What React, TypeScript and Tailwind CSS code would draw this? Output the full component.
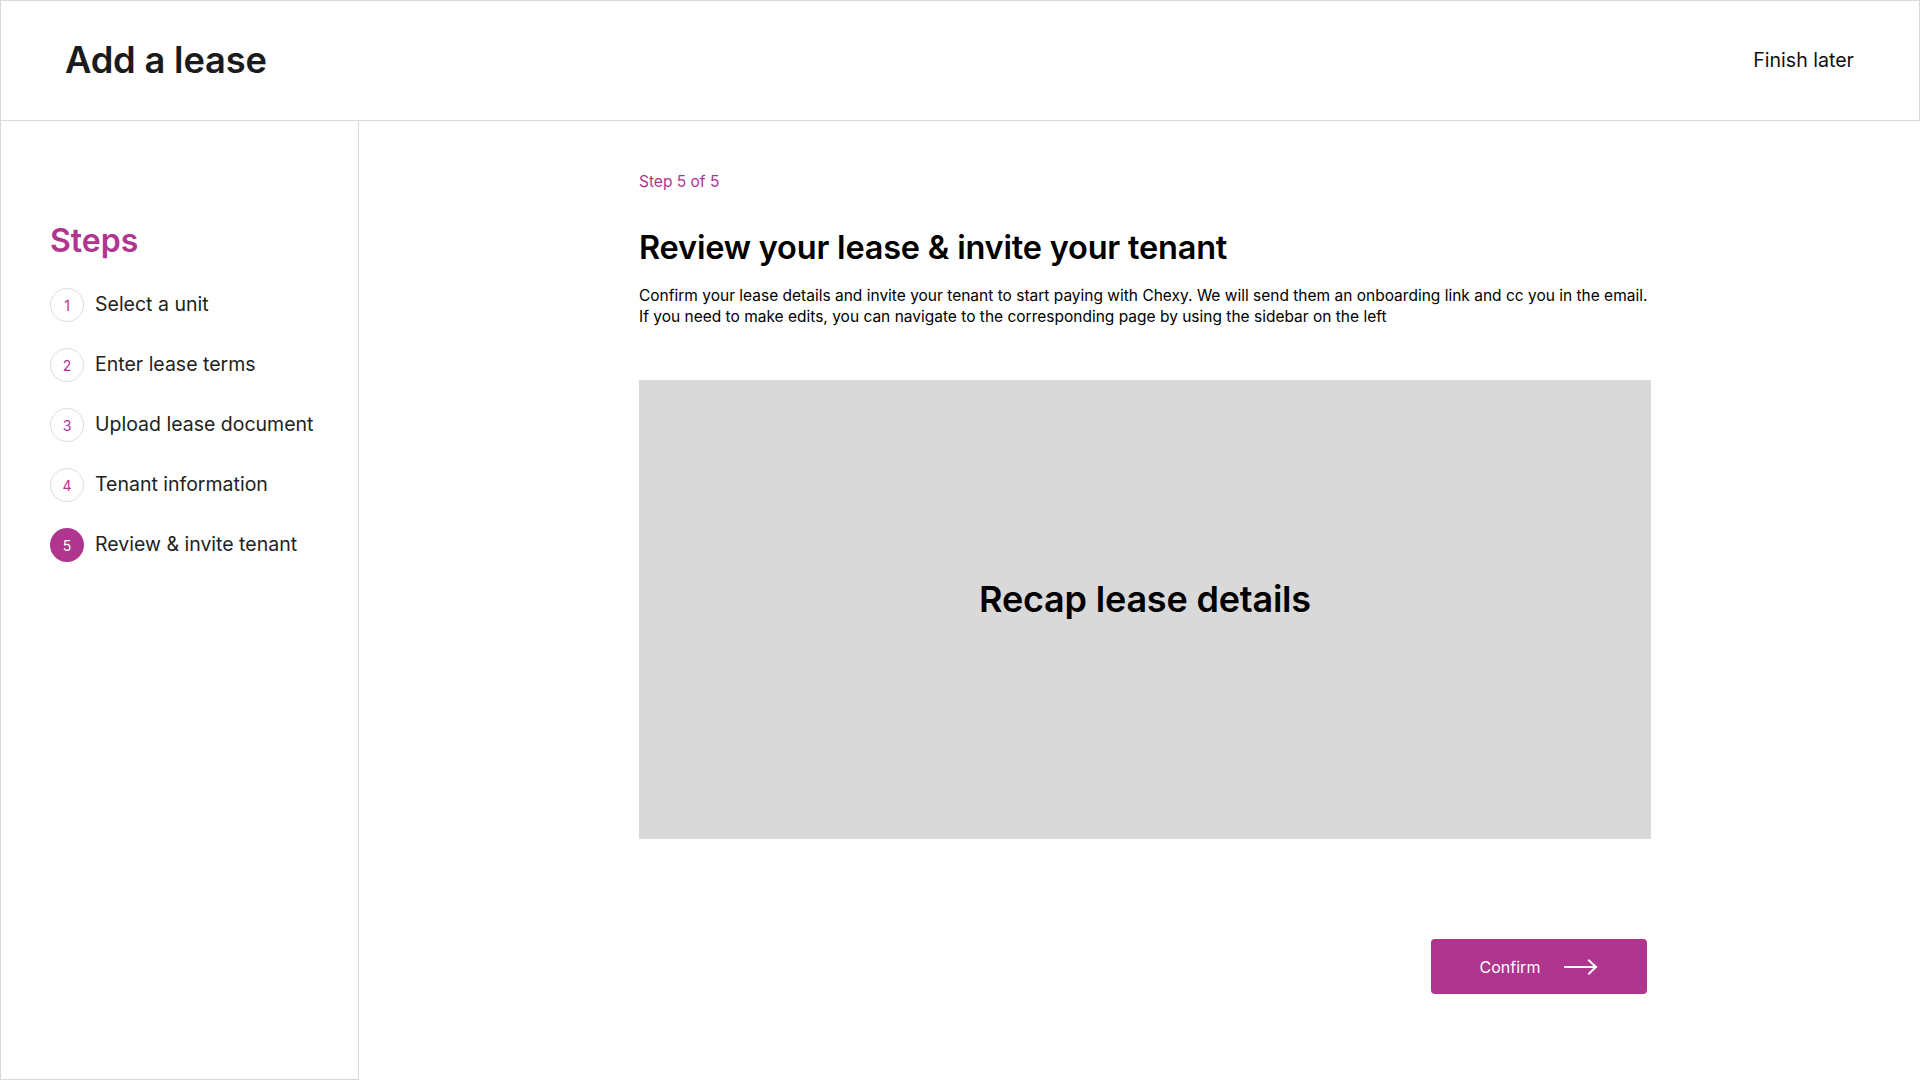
import React from "react";

const steps = [
  "Select a unit",
  "Enter lease terms",
  "Upload lease document",
  "Tenant information",
  "Review & invite tenant",
];

function ArrowRight() {
  return (
    <svg width="34" height="16" viewBox="0 0 34 16" fill="none">
      <path d="M1 8h31M25 1.5L32 8l-7 6.5" stroke="white" strokeWidth="2" strokeLinecap="square" />
    </svg>
  );
}

export default function App() {
  const current = 5;
  return (
    <div className="w-[1920px] h-[1080px] bg-white flex flex-col font-['Inter',sans-serif] text-[#1b1b1b]">
      <header className="h-[121px] shrink-0 border border-[#d9d9d9] flex items-center justify-between pl-[64px] pr-[65px]">
        <h1 className="text-[36.3px] font-semibold tracking-[-0.2px]">Add a lease</h1>
        <button className="text-[19.6px] text-[#111]">Finish later</button>
      </header>
      <div className="flex flex-1 min-h-0">
        <aside className="w-[359px] shrink-0 border border-t-0 border-[#d9d9d9] pt-[100px] pl-[49px]">
          <h2 className="text-[32px] leading-[40px] font-semibold text-[#af358f]">Steps</h2>
          <ol className="mt-[27px] flex flex-col gap-[26px]">
            {steps.map((label, i) => {
              const n = i + 1;
              const active = n === current;
              return (
                <li key={label} className="flex items-center gap-[11px]">
                  <span
                    className={
                      active
                        ? "w-[34px] h-[34px] rounded-full bg-[#af358f] text-white text-[14px] flex items-center justify-center"
                        : "w-[34px] h-[34px] rounded-full border border-[#dcdcdc] text-[#af358f] text-[14px] flex items-center justify-center"
                    }
                  >
                    {n}
                  </span>
                  <span className="text-[19.5px] text-[#222]">{label}</span>
                </li>
              );
            })}
          </ol>
        </aside>
        <main className="flex-1 pl-[280px] pt-[49px]">
          <div className="w-[1012px] flex flex-col">
            <p className="text-[15.5px] leading-[24px] text-[#af358f]">Step 5 of 5</p>
            <h2 className="mt-[34px] text-[32.5px] leading-[40px] font-semibold text-black tracking-[-0.2px]">
              Review your lease &amp; invite your tenant
            </h2>
            <p className="mt-[17px] text-[15.5px] leading-[21px] text-black whitespace-nowrap">
              Confirm your lease details and invite your tenant to start paying with Chexy. We will send them an onboarding link and cc you in the email.
              <br />
              If you need to make edits, you can navigate to the corresponding page by using the sidebar on the left
            </p>
            <div className="mt-[53px] h-[459px] bg-[#d9d9d9] flex items-center justify-center pb-[22px]">
              <span className="text-[36px] font-semibold text-black tracking-[-0.2px]">Recap lease details</span>
            </div>
            <div className="mt-[100px] flex justify-end pr-[4px]">
              <button className="w-[216px] h-[55px] rounded-[4px] bg-[#af358f] text-white text-[16px] flex items-center justify-center gap-[24px]">
                <span>Confirm</span>
                <ArrowRight />
              </button>
            </div>
          </div>
        </main>
      </div>
    </div>
  );
}
